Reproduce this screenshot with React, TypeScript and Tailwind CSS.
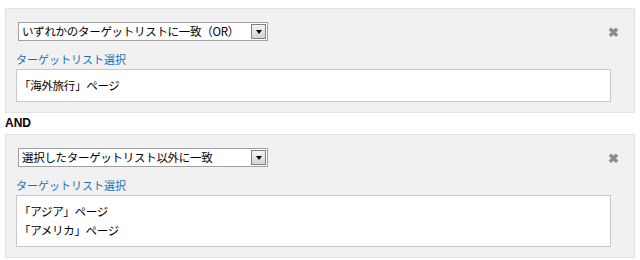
const font = { fontFamily: '"Noto Sans CJK JP", "Liberation Sans", sans-serif' };

const Select = ({ label }: { label: string }) => (
  <div className="flex h-[19px] w-[250px] items-center border border-[#a0a0a0] bg-white">
    <span className="flex-1 whitespace-nowrap pl-[3px] text-[11.5px] leading-none tracking-[-0.3px] text-black">{label}</span>
    <div className="mr-px flex h-[15px] w-[15px] items-center justify-center border border-[#808080] bg-gradient-to-b from-[#f4f4f4] to-[#d4d4d4]">
      <div className="h-0 w-0 border-x-[3px] border-t-[4px] border-x-transparent border-t-black" />
    </div>
  </div>
);

const Condition = ({ mode, items }: { mode: string; items: string[] }) => (
  <div className="flex border border-[#e2e2e2] bg-[#f1f1f1] pb-[10px] pl-[10px] pr-[9px] pt-[13px]">
    <div className="flex-1">
      <div className="pl-[2px]">
        <Select label={mode} />
      </div>
      <div className="mt-[10px] text-[11px] leading-[16px] text-[#1a6eb4]">ターゲットリスト選択</div>
      <div className="mt-[2px] border border-[#c8c8c8] bg-white px-[2px] py-[6px] text-[11.5px] leading-[19px] tracking-[-0.3px] text-black">
        {items.map((t) => (
          <div key={t}>{t}</div>
        ))}
      </div>
    </div>
    <div className="w-[14px] pt-[3px] text-[13px] font-bold leading-none text-[#8c8c8c]">
      <span className="-ml-[3px]">✖</span>
    </div>
  </div>
);

export default function App() {
  return (
    <div className="h-[260px] w-[640px] bg-white px-[5px] pt-[8px]" style={font}>
      <Condition mode="いずれかのターゲットリストに一致（OR）" items={["「海外旅行」ページ"]} />
      <div className="py-[4px] text-[12px] font-bold leading-[13px] text-black" style={{ fontFamily: '"Liberation Sans", sans-serif' }}>
        AND
      </div>
      <Condition mode="選択したターゲットリスト以外に一致" items={["「アジア」ページ", "「アメリカ」ページ"]} />
    </div>
  );
}
